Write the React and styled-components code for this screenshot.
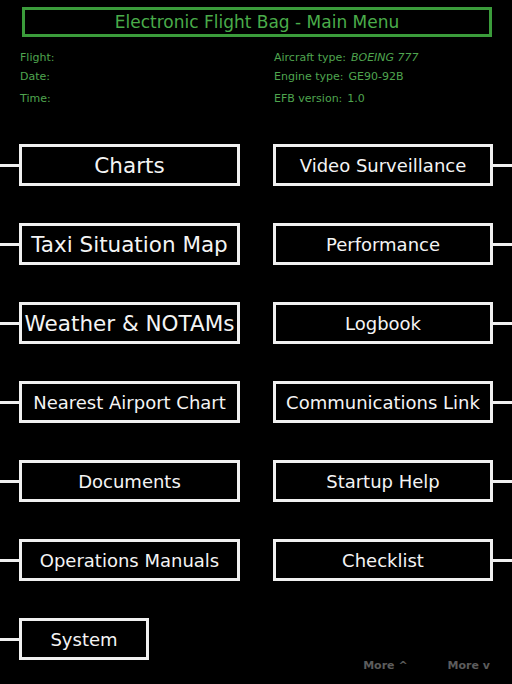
import React from "react";
import styled, { createGlobalStyle } from "styled-components";

const GlobalStyle = createGlobalStyle`
  html, body {
    margin: 0;
    padding: 0;
    background: #000;
  }
  body {
    font-family: "DejaVu Sans", "Liberation Sans", sans-serif;
  }
`;

const Screen = styled.div`
  width: 512px;
  height: 684px;
  background: #000;
  overflow: hidden;
  padding-top: 7px;
  box-sizing: border-box;
`;

const TitleBar = styled.div`
  margin-left: 22px;
  width: 470px;
  height: 30px;
  box-sizing: border-box;
  border: 3px solid #3b9c3b;
  display: flex;
  align-items: center;
  justify-content: center;
  color: #4aac4a;
  font-size: 17px;
  line-height: 1;
`;

const Info = styled.div`
  margin-top: 14px;
  padding-left: 20px;
  display: grid;
  grid-template-columns: 254px 1fr;
  grid-template-rows: 19px 22px 14px;
  color: #4fa54f;
  font-size: 11px;
  line-height: 14px;
`;

const Field = styled.div`
  white-space: nowrap;
`;

const Value = styled.span`
  margin-left: 5px;
  font-style: ${(p) => (p.$italic ? "italic" : "normal")};
`;

const Menu = styled.div`
  margin-top: 38px;
  display: grid;
  grid-template-columns: 256px 256px;
  grid-auto-rows: 42px;
  row-gap: 37px;
`;

const Item = styled.div`
  display: flex;
  align-items: center;
  justify-content: ${(p) => (p.$right ? "flex-end" : "flex-start")};
`;

const Connector = styled.div`
  width: 19px;
  height: 3px;
  background: #f0f0f0;
  flex: none;
`;

const Button = styled.div`
  width: ${(p) => p.$width}px;
  height: 42px;
  box-sizing: border-box;
  border: 3px solid #f0f0f0;
  background: #000;
  color: #f4f4f4;
  font-size: ${(p) => p.$size}px;
  display: flex;
  align-items: center;
  justify-content: center;
  white-space: nowrap;
  flex: none;
`;

const Footer = styled.div`
  margin-top: 37px;
  display: flex;
  align-items: flex-start;
`;

const MoreLinks = styled.div`
  margin-left: auto;
  margin-right: 22px;
  margin-top: 41px;
  display: flex;
  gap: 40px;
`;

const More = styled.span`
  color: #5c5c5c;
  font-size: 11px;
  font-weight: bold;
  line-height: 14px;
`;

const rows = [
  [
    { label: "Charts", size: 21.5 },
    { label: "Video Surveillance", size: 18 },
  ],
  [
    { label: "Taxi Situation Map", size: 21.5 },
    { label: "Performance", size: 18 },
  ],
  [
    { label: "Weather & NOTAMs", size: 21.5 },
    { label: "Logbook", size: 18 },
  ],
  [
    { label: "Nearest Airport Chart", size: 18 },
    { label: "Communications Link", size: 18 },
  ],
  [
    { label: "Documents", size: 18 },
    { label: "Startup Help", size: 18 },
  ],
  [
    { label: "Operations Manuals", size: 18 },
    { label: "Checklist", size: 18 },
  ],
];

export default function App() {
  return (
    <Screen>
      <GlobalStyle />
      <TitleBar>Electronic Flight Bag - Main Menu</TitleBar>
      <Info>
        <Field>Flight:</Field>
        <Field>
          Aircraft type:<Value $italic>BOEING 777</Value>
        </Field>
        <Field>Date:</Field>
        <Field>
          Engine type:<Value>GE90-92B</Value>
        </Field>
        <Field>Time:</Field>
        <Field>
          EFB version:<Value>1.0</Value>
        </Field>
      </Info>
      <Menu>
        {rows.map(([left, right]) => (
          <React.Fragment key={left.label}>
            <Item>
              <Connector />
              <Button $width={221} $size={left.size}>
                {left.label}
              </Button>
            </Item>
            <Item $right>
              <Button $width={220} $size={right.size}>
                {right.label}
              </Button>
              <Connector />
            </Item>
          </React.Fragment>
        ))}
      </Menu>
      <Footer>
        <Item>
          <Connector />
          <Button $width={130} $size={18}>
            System
          </Button>
        </Item>
        <MoreLinks>
          <More>More ^</More>
          <More>More v</More>
        </MoreLinks>
      </Footer>
    </Screen>
  );
}
